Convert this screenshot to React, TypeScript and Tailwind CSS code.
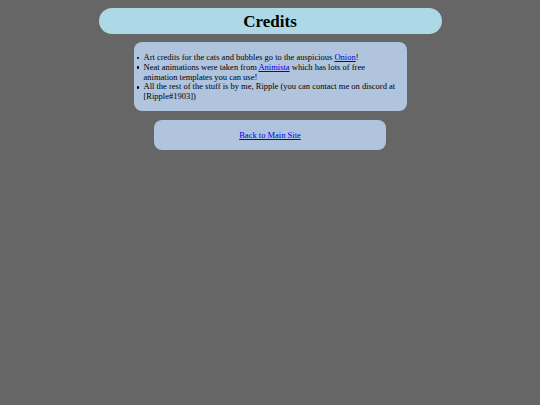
import React from 'react';

const Bullet = ({ children }: { children: React.ReactNode }) => (
  <li className="flex">
    <span className="flex h-[9.8px] w-[10px] shrink-0 items-center">
      <span className="ml-[3px] h-[2.5px] w-[2.5px] rounded-full bg-black" />
    </span>
    <span>{children}</span>
  </li>
);

export default function App() {
  return (
    <div className="min-h-[405px] w-full bg-[#666666] pt-[8px] text-black" style={{ fontFamily: '"Liberation Serif", serif' }}>
      {/* Title */}
      <div className="mx-auto flex h-[26px] w-[343px] items-center justify-center rounded-full bg-[#add8e6]">
        <h1 className="pt-[1px] text-[17px] font-bold leading-none">Credits</h1>
      </div>

      {/* Credits list */}
      <div className="mx-auto mt-[8px] w-[273px] rounded-[8px] bg-[#b0c4de] pb-[9px] pr-[8px] pt-[11px] text-[8.5px] leading-[9.8px]">
        <ul>
          <Bullet>
            Art credits for the cats and bubbles go to the auspicious{' '}
            <a href="#" className="text-[#0000ee] underline">Onion</a>!
          </Bullet>
          <Bullet>
            Neat animations were taken from{' '}
            <a href="#" className="text-[#0000ee] underline">Animista</a> which has lots of free animation templates you can use!
          </Bullet>
          <Bullet>All the rest of the stuff is by me, Ripple (you can contact me on discord at [Ripple#1903])</Bullet>
        </ul>
      </div>

      {/* Back link */}
      <div className="mx-auto mt-[9px] flex h-[30px] w-[232px] items-center justify-center rounded-[8px] bg-[#b0c4de] pt-[1px] text-[8.5px]">
        <a href="#" className="text-[#0000ee] underline">Back to Main Site</a>
      </div>
    </div>
  );
}
